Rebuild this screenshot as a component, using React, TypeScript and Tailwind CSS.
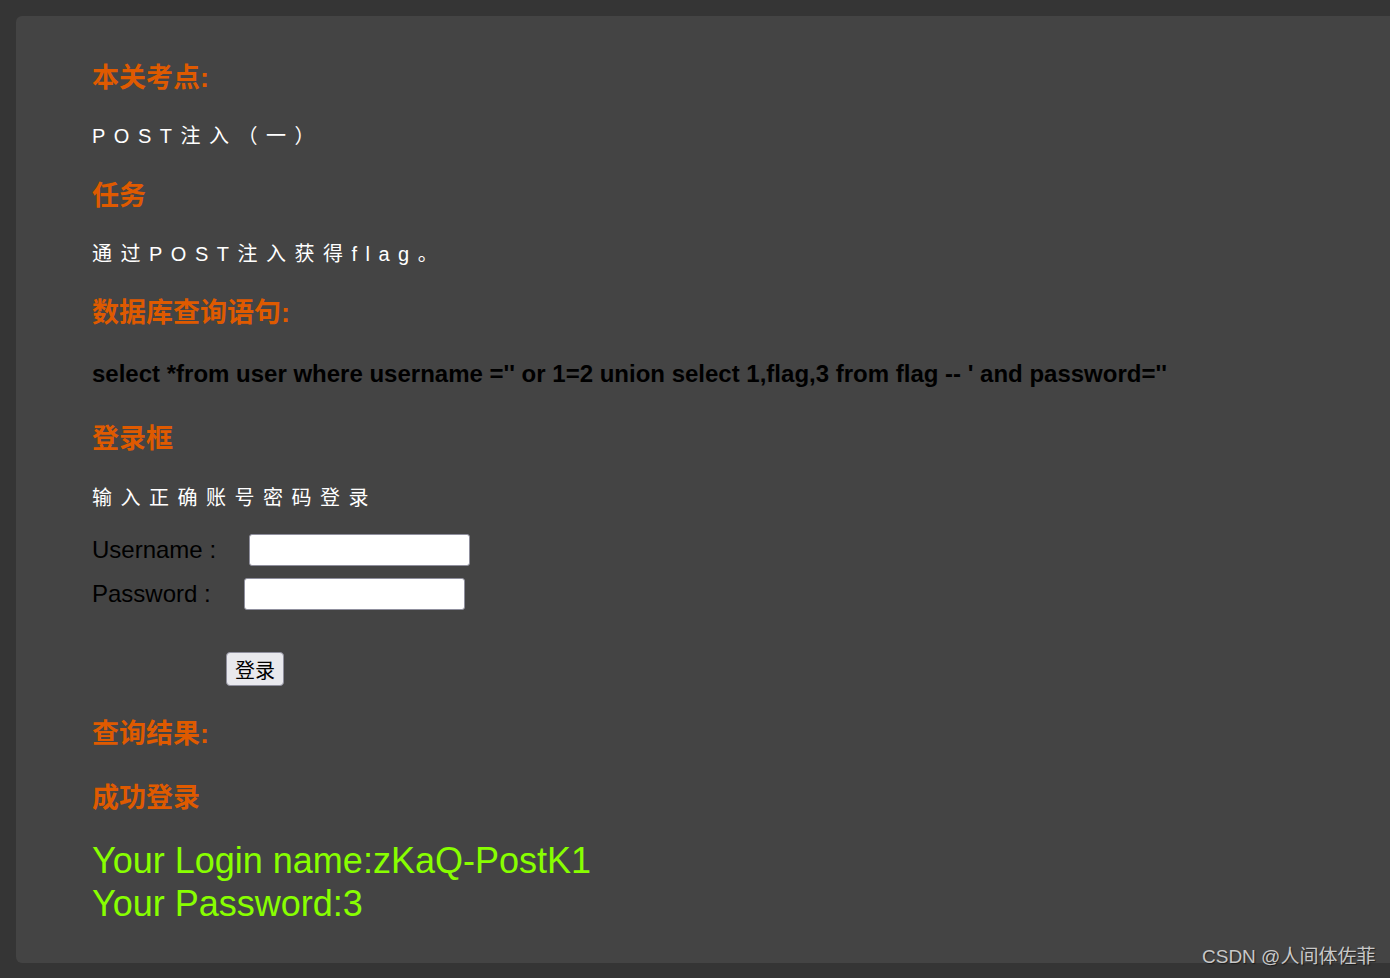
import React from "react";

const H = ({ children, className = "" }: { children: React.ReactNode; className?: string }) => (
  <div
    className={`text-[27px] leading-[36px] font-bold text-[#df5a00] ${className}`}
    style={{ fontFamily: '"Liberation Sans", "Noto Sans CJK SC", sans-serif' }}
  >
    {children}
  </div>
);

const T = ({ children, className = "" }: { children: React.ReactNode; className?: string }) => (
  <div
    className={`text-[20px] leading-[28px] tracking-[8.5px] text-white ${className}`}
    style={{ fontFamily: '"Liberation Sans", "Noto Sans CJK SC", sans-serif' }}
  >
    {children}
  </div>
);

export default function App() {
  return (
    <div
      className="relative w-full h-[978px] overflow-hidden bg-[#353535] pt-4"
      style={{ fontFamily: '"Liberation Sans", "Noto Sans CJK SC", sans-serif' }}
    >
      <div className="ml-4 -mr-4 h-[947px] rounded-md bg-[#444444] pl-[76px] pt-[44px]">
        <H>本关考点:</H>
        <T className="mt-[26px]">POST注入（一）</T>
        <H className="mt-[28px]">任务</H>
        <T className="mt-[26px]">通过POST注入获得flag。</T>
        <H className="mt-[27px]">数据库查询语句:</H>
        <div className="mt-[28px] text-[24px] leading-[30px] font-bold text-black">
          select *from user where username ='' or 1=2 union select 1,flag,3 from flag -- ' and password=''
        </div>
        <H className="mt-[32px]">登录框</H>
        <T className="mt-[27px]">输入正确账号密码登录</T>
        <div className="mt-[22px] flex items-center">
          <span className="text-[24px] leading-[32px] text-black">Username :</span>
          <div className="ml-[33px] h-[32px] w-[221px] rounded-[3px] border border-[#8f8f9d] bg-white" />
        </div>
        <div className="mt-[12px] flex items-center">
          <span className="text-[24px] leading-[32px] text-black">Password :</span>
          <div className="ml-[33px] h-[32px] w-[221px] rounded-[3px] border border-[#8f8f9d] bg-white" />
        </div>
        <div className="mt-[42px] pl-[134px]">
          <div className="flex h-[34px] w-[58px] items-center justify-center rounded-[4px] border border-[#8f8f9d] bg-[#e9e9ed] pt-[4px] text-[20px] text-black">
            登录
          </div>
        </div>
        <H className="mt-[30px]">查询结果:</H>
        <H className="mt-[28px]">成功登录</H>
        <div className="mt-[23px] text-[36px] leading-[43px] text-[#88ff00]">
          <div>Your Login name:zKaQ-PostK1</div>
          <div>Your Password:3</div>
        </div>
      </div>
      <div
        className="absolute left-[1202px] top-[944px] text-[19px] leading-[26px] text-[#c8c8c8]"
        style={{ textShadow: "1px 1px 1px rgba(0,0,0,0.5)" }}
      >
        CSDN @人间体佐菲
      </div>
    </div>
  );
}
